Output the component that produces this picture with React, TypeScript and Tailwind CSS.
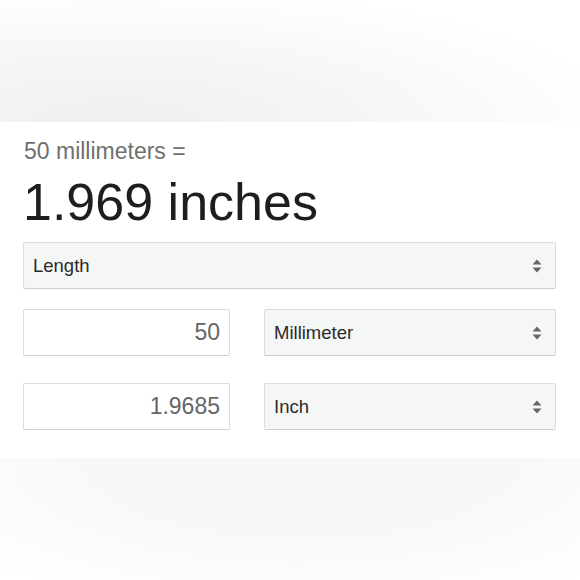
function SelectArrows() {
  return (
    <svg width="12" height="18" viewBox="0 0 12 18" className="shrink-0">
      <path d="M6 2.5 L10.5 7.5 L1.5 7.5 Z" fill="#666" />
      <path d="M6 15.5 L10.5 10.5 L1.5 10.5 Z" fill="#666" />
    </svg>
  );
}

function FakeSelect({ label, className }: { label: string; className?: string }) {
  return (
    <div
      className={`flex h-[47px] items-center justify-between rounded-[2px] border border-[#dcdcdc] border-b-[#cfcfd2] bg-[#f5f6f6] pl-[9px] pr-[12px] ${className ?? ""}`}
    >
      <span className="text-[18.5px] text-[#2a2a2a]">{label}</span>
      <SelectArrows />
    </div>
  );
}

function NumberBox({ value }: { value: string }) {
  return (
    <div className="flex h-[47px] w-[207px] items-center justify-end rounded-[2px] border border-[#dcdcdc] border-b-[#cfcfd2] bg-white pr-[9px]">
      <span className="text-[23px] text-[#666]">{value}</span>
    </div>
  );
}

export default function App() {
  return (
    <div
      className="flex h-[580px] w-[580px] flex-col bg-white"
      style={{ fontFamily: '"Liberation Sans", Arial, sans-serif' }}
    >
      <div className="h-[122px] shrink-0 bg-[radial-gradient(ellipse_110%_140%_at_20%_100%,#efefef_0%,#f6f6f6_40%,#ffffff_80%)]" />

      <div className="shrink-0 bg-white px-[23px] pt-[16px]">
        <div className="pl-[1px] text-[23px] leading-[26px] text-[#6f6f6f]">50 millimeters =</div>
        <div className="mt-[8px] text-[52px] leading-[60px] text-[#1e1e1e]">1.969 inches</div>

        <FakeSelect label="Length" className="mt-[10px] w-[533px]" />

        <div className="mt-[20px] flex gap-[34px]">
          <NumberBox value="50" />
          <FakeSelect label="Millimeter" className="w-[292px]" />
        </div>

        <div className="mt-[27px] flex gap-[34px]">
          <NumberBox value="1.9685" />
          <FakeSelect label="Inch" className="w-[292px]" />
        </div>
        <div className="h-[28px]" />
      </div>

      <div className="flex-1 bg-[radial-gradient(ellipse_75%_130%_at_52%_0%,#f6f7f8_0%,#f8f8f9_50%,#ffffff_100%)]" />
    </div>
  );
}
